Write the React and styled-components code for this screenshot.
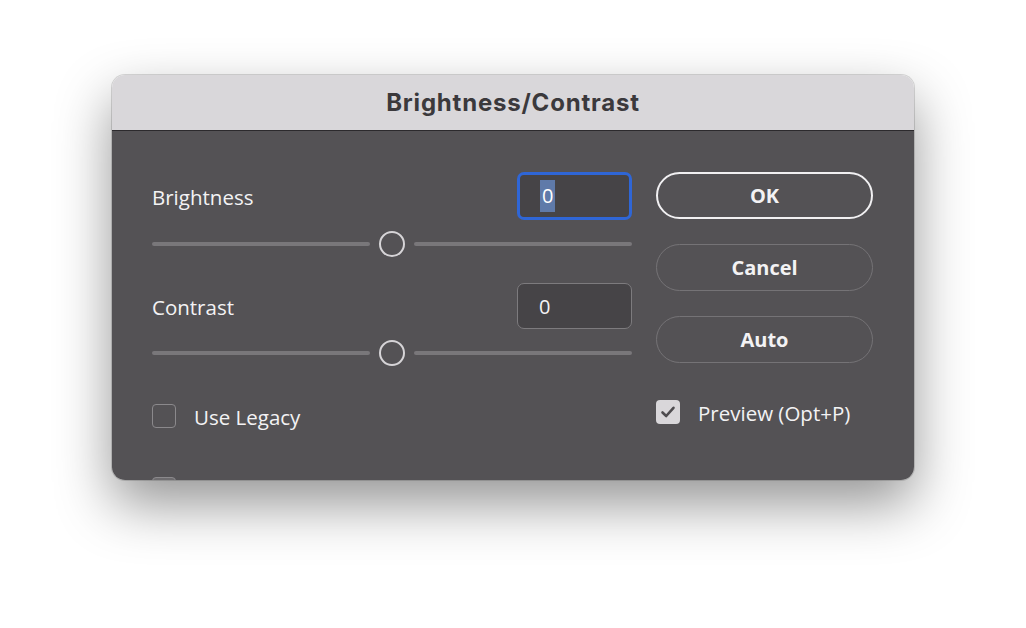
import React from "react";
import styled, { createGlobalStyle } from "styled-components";

const GlobalStyle = createGlobalStyle`
  html, body {
    margin: 0;
    padding: 0;
    background: #ffffff;
  }
  body {
    font-family: "Open Sans", "Liberation Sans", sans-serif;
  }
`;

const Page = styled.div`
  width: 100%;
  height: 100vh;
  box-sizing: border-box;
  padding-top: 75px;
  display: flex;
  justify-content: center;
  align-items: flex-start;
`;

const Dialog = styled.div`
  width: 802px;
  height: 405px;
  border-radius: 13px;
  overflow: hidden;
  display: flex;
  flex-direction: column;
  box-shadow: 0 24px 55px rgba(0, 0, 0, 0.42), 0 0 0 1px rgba(0, 0, 0, 0.14);
`;

const TitleBar = styled.div`
  height: 56px;
  flex: none;
  background: #d9d7da;
  border-bottom: 1px solid #2c2a2d;
  box-sizing: border-box;
  display: flex;
  align-items: center;
  justify-content: center;

  h1 {
    margin: 0;
    font-family: Inter, "Liberation Sans", sans-serif;
    font-weight: 700;
    font-size: 24px;
    letter-spacing: 0.8px;
    color: #3b393c;
  }
`;

const Body = styled.div`
  flex: 1;
  background: #545255;
  display: flex;
  gap: 24px;
  padding: 41px 41px 0 40px;
  overflow: hidden;
`;

const LeftColumn = styled.div`
  width: 480px;
  display: flex;
  flex-direction: column;
`;

const RightColumn = styled.div`
  width: 217px;
  display: flex;
  flex-direction: column;
  gap: 25px;
`;

const FieldRow = styled.div`
  display: flex;
  justify-content: space-between;
  align-items: center;
  margin-top: ${(p) => p.$top || 0}px;
`;

const Label = styled.span`
  font-size: 20.5px;
  color: #f3f2f4;
  line-height: 1;
  padding-top: 3px;
  white-space: nowrap;
`;

const NumberBox = styled.div`
  box-sizing: border-box;
  width: 115px;
  height: ${(p) => (p.$focused ? 48 : 46)}px;
  border-radius: 7px;
  border: ${(p) => (p.$focused ? "3px solid #2f66d6" : "1.5px solid #7d7b7e")};
  background: #464447;
  display: flex;
  align-items: center;
  padding-left: ${(p) => (p.$focused ? 20 : 21)}px;
  font-size: 20px;
  color: #f4f3f5;
`;

const Selected = styled.span`
  display: inline-block;
  line-height: 32px;
  padding: 0 2px;
  background: #5f7aa9;
  color: #ffffff;
`;

const Slider = styled.div`
  height: 26px;
  margin-top: 11px;
  display: flex;
  align-items: center;
`;

const Track = styled.div`
  flex: 1;
  height: 4px;
  border-radius: 2px;
  background: #79777a;
`;

const Thumb = styled.div`
  box-sizing: border-box;
  width: 26px;
  height: 26px;
  margin: 0 9px;
  border-radius: 50%;
  border: 2px solid #d6d4d7;
`;

const CheckRow = styled.label`
  display: flex;
  align-items: center;
  gap: 18px;
  margin-top: ${(p) => p.$top || 0}px;
`;

const Box = styled.span`
  box-sizing: border-box;
  width: 24px;
  height: 24px;
  flex: none;
  border-radius: 4px;
  display: flex;
  align-items: center;
  justify-content: center;
  border: ${(p) => (p.$checked ? "none" : "1.5px solid #8b898c")};
  background: ${(p) => (p.$checked ? "#d9d7da" : p.$muted ? "#6d6b6e" : "transparent")};
`;

const Button = styled.button`
  box-sizing: border-box;
  height: 47px;
  border-radius: 24px;
  background: transparent;
  border: ${(p) => (p.$primary ? "2px solid #f1f0f2" : "1.5px solid #757376")};
  font-family: "Open Sans", "Liberation Sans", sans-serif;
  font-weight: 700;
  font-size: 20px;
  color: #f3f2f4;
  padding: 0;
  cursor: pointer;
`;

const SliderControl = () => (
  <Slider>
    <Track />
    <Thumb />
    <Track />
  </Slider>
);

const Check = () => (
  <svg width="18" height="18" viewBox="0 0 18 18">
    <polyline
      points="3.5,9.5 7.2,13 14.5,4.8"
      fill="none"
      stroke="#4e4c4f"
      strokeWidth="2.6"
      strokeLinecap="round"
      strokeLinejoin="round"
    />
  </svg>
);

export default function App() {
  return (
    <>
      <GlobalStyle />
      <Page>
        <Dialog>
          <TitleBar>
            <h1>Brightness/Contrast</h1>
          </TitleBar>
          <Body>
            <LeftColumn>
              <FieldRow>
                <Label>Brightness</Label>
                <NumberBox $focused>
                  <Selected>0</Selected>
                </NumberBox>
              </FieldRow>
              <SliderControl />
              <FieldRow $top={26}>
                <Label>Contrast</Label>
                <NumberBox>0</NumberBox>
              </FieldRow>
              <SliderControl />
              <CheckRow $top={38}>
                <Box />
                <Label>Use Legacy</Label>
              </CheckRow>
              <CheckRow $top={49}>
                <Box $muted />
              </CheckRow>
            </LeftColumn>
            <RightColumn>
              <Button $primary>OK</Button>
              <Button>Cancel</Button>
              <Button>Auto</Button>
              <CheckRow $top={12}>
                <Box $checked>
                  <Check />
                </Box>
                <Label>Preview (Opt+P)</Label>
              </CheckRow>
            </RightColumn>
          </Body>
        </Dialog>
      </Page>
    </>
  );
}
